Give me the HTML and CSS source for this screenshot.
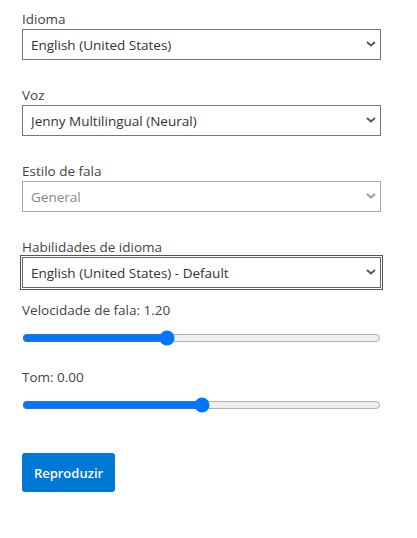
FILE: index.html
```html
<!DOCTYPE html>
<html lang="pt-BR">
<head>
<meta charset="UTF-8" />
<meta name="viewport" content="width=device-width, initial-scale=1" />
<title>Configurações de voz</title>
<link rel="stylesheet" href="styles.css">
</head>
<body>

<div class="panel">
  <div class="field">
    <label for="idioma">Idioma</label>
    <div class="select-wrap">
      <select id="idioma">
        <option>English (United States)</option>
      </select>
      <svg class="chevron" width="10" height="6" viewBox="0 0 10 6"><path d="M1 1l4 3.5L9 1" fill="none" stroke="currentColor" stroke-width="1.8"/></svg>
    </div>
  </div>

  <div class="field">
    <label for="voz">Voz</label>
    <div class="select-wrap">
      <select id="voz">
        <option>Jenny Multilingual (Neural)</option>
      </select>
      <svg class="chevron" width="10" height="6" viewBox="0 0 10 6"><path d="M1 1l4 3.5L9 1" fill="none" stroke="currentColor" stroke-width="1.8"/></svg>
    </div>
  </div>

  <div class="field">
    <label for="estilo">Estilo de fala</label>
    <div class="select-wrap disabled">
      <select id="estilo" disabled>
        <option>General</option>
      </select>
      <svg class="chevron" width="10" height="6" viewBox="0 0 10 6"><path d="M1 1l4 3.5L9 1" fill="none" stroke="currentColor" stroke-width="1.8"/></svg>
    </div>
  </div>

  <div class="field">
    <label for="habilidades">Habilidades de idioma</label>
    <div class="select-wrap">
      <select id="habilidades" class="focused">
        <option>English (United States) - Default</option>
      </select>
      <svg class="chevron" width="10" height="6" viewBox="0 0 10 6"><path d="M1 1l4 3.5L9 1" fill="none" stroke="currentColor" stroke-width="1.8"/></svg>
    </div>
  </div>

  <div class="slider">
    <label for="velocidade">Velocidade de fala: <span id="velocidadeVal">1.20</span></label>
    <input type="range" id="velocidade" min="0" max="3" step="0.01" value="1.2" />
  </div>

  <div class="slider">
    <label for="tom">Tom: <span id="tomVal">0.00</span></label>
    <input type="range" id="tom" min="-1" max="1" step="0.01" value="0" />
  </div>

  <button id="playBtn">Reproduzir</button>
</div>

<script>
  const velocidade = document.getElementById('velocidade');
  const tom = document.getElementById('tom');

  velocidade.oninput = () => {
    document.getElementById('velocidadeVal').textContent = Number(velocidade.value).toFixed(2);
  };
  tom.oninput = () => {
    document.getElementById('tomVal').textContent = Number(tom.value).toFixed(2);
  };
</script>

</body>
</html>
```

FILE: styles.css
```css
body { margin: 0; padding: 9px 0 0 22px; background: #fff; color: #333; font-family: "Open Sans", "Noto Sans", sans-serif; font-size: 13.5px; }
.panel { width: 359px; }
.field { margin-bottom: 25px; }
.field:nth-child(4) { margin-bottom: 12px; }
label { display: block; line-height: 20px; color: #444; }
.select-wrap { position: relative; color: #555; }
.select-wrap.disabled { color: #999; }
select { display: block; width: 100%; height: 31px; margin: 0; padding: 0 24px 0 8px; border: 1px solid #767676; border-radius: 0; background: #fff; color: #333; font: inherit; appearance: none; -webkit-appearance: none; }
select:disabled { border-color: #aaa; color: #888; background: #fff; opacity: 1; }
select.focused { outline: 1px solid #555; outline-offset: 1px; border-color: #666; }
.chevron { position: absolute; right: 5px; top: 12px; pointer-events: none; }
.slider input { display: block; width: 100%; margin: 10px 0 0; height: 16px; accent-color: #0075ff; }
.slider + .slider { margin-top: 21px; }
button { margin-top: 40px; width: 93px; height: 39px; padding: 0; border: none; border-radius: 3px; background: #0078d4; color: #fff; font: inherit; font-size: 13px; font-weight: 600; cursor: pointer; }
button:hover { background: #106ebe; }
```
